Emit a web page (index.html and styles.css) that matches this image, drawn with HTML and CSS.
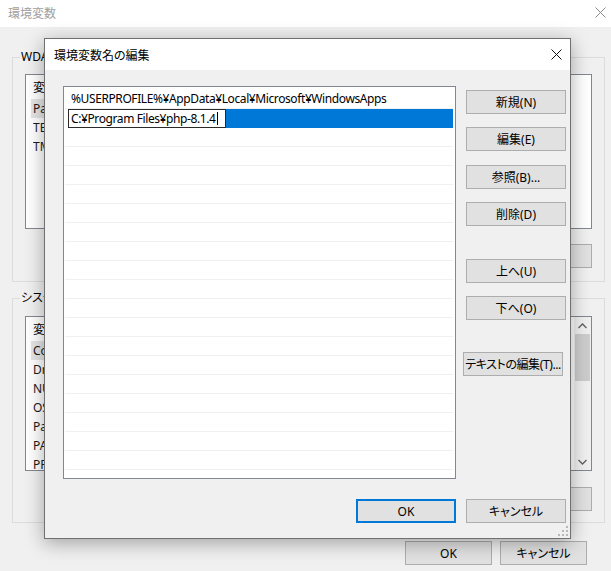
FILE: index.html
```html
<!DOCTYPE html>
<html lang="ja">
<head>
<meta charset="utf-8">
<title>環境変数名の編集</title>
<link rel="stylesheet" href="styles.css">
</head>
<body>
<div class="desk">
  <div class="bgwin">
    <div class="bg-title">
      <span class="bg-title-text">環境変数</span>
      <svg class="bg-close" width="11" height="11" viewBox="0 0 11 11"><path d="M0.5 0.5 L10.5 10.5 M10.5 0.5 L0.5 10.5" stroke="#8a8a8a" stroke-width="1" fill="none"/></svg>
    </div>
    <div class="bg-body">
      <fieldset class="group g-user">
        <legend>WDAG のユーザー環境変数(U)</legend>
        <div class="lv lv-user">
          <div class="lv-main">
            <div class="lv-head"><span class="c1">変数</span></div>
            <div class="lv-row sel"><span class="c1">Path</span></div>
            <div class="lv-row"><span class="c1">TEMP</span></div>
            <div class="lv-row"><span class="c1">TMP</span></div>
          </div>
        </div>
        <div class="grp-btns">
          <button class="bbtn"></button>
          <button class="bbtn"></button>
          <button class="bbtn"></button>
        </div>
      </fieldset>
      <fieldset class="group g-sys">
        <legend>システム環境変数(S)</legend>
        <div class="lv lv-sys">
          <div class="lv-main">
            <div class="lv-head"><span class="c1">変数</span></div>
            <div class="lv-row sel"><span class="c1">ComSpec</span></div>
            <div class="lv-row"><span class="c1">DriverData</span></div>
            <div class="lv-row"><span class="c1">NUMBER_OF</span></div>
            <div class="lv-row"><span class="c1">OS</span></div>
            <div class="lv-row"><span class="c1">Path</span></div>
            <div class="lv-row"><span class="c1">PATHEXT</span></div>
            <div class="lv-row"><span class="c1">PROCESSOR</span></div>
          </div>
          <div class="vscroll">
            <div class="sb-btn"><svg width="9" height="6" viewBox="0 0 9 6"><path d="M0.5 5 L4.5 1 L8.5 5" stroke="#606060" stroke-width="1.3" fill="none"/></svg></div>
            <div class="sb-track"><div class="sb-thumb"></div></div>
            <div class="sb-btn"><svg width="9" height="6" viewBox="0 0 9 6"><path d="M0.5 1 L4.5 5 L8.5 1" stroke="#606060" stroke-width="1.3" fill="none"/></svg></div>
          </div>
        </div>
        <div class="grp-btns">
          <button class="bbtn"></button>
          <button class="bbtn"></button>
          <button class="bbtn"></button>
        </div>
      </fieldset>
      <div class="bg-foot">
        <button class="bbtn foot">OK</button>
        <button class="bbtn foot">キャンセル</button>
      </div>
    </div>
  </div>

  <div class="dialog">
    <div class="dlg-title">
      <span class="dlg-title-text">環境変数名の編集</span>
      <svg class="dlg-close" width="11" height="11" viewBox="0 0 11 11"><path d="M0.5 0.5 L10.5 10.5 M10.5 0.5 L0.5 10.5" stroke="#111" stroke-width="1" fill="none"/></svg>
    </div>
    <div class="dlg-body">
      <div class="dlg-main">
        <div class="plist">
          <div class="prow">%USERPROFILE%¥AppData¥Local¥Microsoft¥WindowsApps</div>
          <div class="prow sel"><div class="edit"><span class="edit-text">C:¥Program Files¥php-8.1.4</span><span class="caret"></span></div></div>
          <div class="prow"></div>
          <div class="prow"></div>
          <div class="prow"></div>
          <div class="prow"></div>
          <div class="prow"></div>
          <div class="prow"></div>
          <div class="prow"></div>
          <div class="prow"></div>
          <div class="prow"></div>
          <div class="prow"></div>
          <div class="prow"></div>
          <div class="prow"></div>
          <div class="prow"></div>
          <div class="prow"></div>
          <div class="prow"></div>
          <div class="prow"></div>
          <div class="prow"></div>
          <div class="prow"></div>
          <div class="prow"></div>
        </div>
        <div class="side">
          <button class="btn">新規(N)</button>
          <button class="btn">編集(E)</button>
          <button class="btn b-ref">参照(B)...</button>
          <button class="btn">削除(D)</button>
          <button class="btn b-up">上へ(U)</button>
          <button class="btn">下へ(O)</button>
          <button class="btn b-text">テキストの編集(T)...</button>
        </div>
      </div>
      <div class="dlg-foot">
        <button class="btn default">OK</button>
        <button class="btn">キャンセル</button>
      </div>
    </div>
    <svg class="grip" width="10" height="10" viewBox="0 0 10 10">
      <rect x="8" y="0" width="2" height="2" fill="#b8b8b8"/>
      <rect x="4" y="4" width="2" height="2" fill="#b8b8b8"/>
      <rect x="8" y="4" width="2" height="2" fill="#b8b8b8"/>
      <rect x="0" y="8" width="2" height="2" fill="#b8b8b8"/>
      <rect x="4" y="8" width="2" height="2" fill="#b8b8b8"/>
      <rect x="8" y="8" width="2" height="2" fill="#b8b8b8"/>
    </svg>
  </div>
</div>
</body>
</html>
```

FILE: styles.css
```css
* { box-sizing: border-box; }

html, body {
  margin: 0;
  padding: 0;
  width: 611px;
  height: 571px;
  overflow: hidden;
}

body {
  font-family: "Noto Sans", "Noto Sans CJK JP", sans-serif;
  font-size: 12px;
  color: #000;
  background: #f0f0f0;
  font-feature-settings: "palt";
}

.desk {
  position: relative;
  width: 611px;
  height: 571px;
  overflow: hidden;
}

/* ---------- background window ---------- */
.bgwin {
  width: 611px;
  height: 571px;
  background: #f0f0f0;
  display: flex;
  flex-direction: column;
}

.bg-title {
  height: 27px;
  background: #fff;
  display: flex;
  align-items: center;
  justify-content: space-between;
  padding: 0 5px 2px 8px;
  flex: none;
}

.bg-title-text {
  color: #a0a0a0;
  font-family: "Noto Sans CJK JP", sans-serif;
  font-size: 12px;
}

.bg-body {
  padding: 22px 6px 0 12px;
  display: flex;
  flex-direction: column;
}

.group {
  margin: 0;
  border: 1px solid #dcdcdc;
  padding: 9px 12px 13px 12px;
  min-width: 0;
}

.group legend {
  padding: 0 1px;
  margin-left: -5px;
  line-height: 16px;
  height: 16px;
  white-space: nowrap;
}

.g-sys {
  margin-top: 8px;
  padding-top: 10px;
  padding-bottom: 11px;
}

.lv {
  border: 1px solid #828790;
  background: #fff;
  display: flex;
  overflow: hidden;
}

.lv-user { height: 155px; }
.lv-sys { height: 155px; }

.lv-main {
  flex: 1;
  min-width: 0;
  overflow: hidden;
}

.lv-head {
  height: 24px;
  display: flex;
  align-items: center;
  padding-left: 7px;
  white-space: nowrap;
}

.lv-row {
  width: 300px;
  height: 19px;
  display: flex;
  align-items: center;
  margin-left: 5px;
  padding-left: 2px;
  white-space: nowrap;
  color: #1a1a1a;
}

.lv-row.sel { background: #e5e5e5; }

.c1 {
  width: 170px;
  flex: none;
  overflow: hidden;
}

.vscroll {
  width: 17px;
  flex: none;
  background: #f0f0f0;
  display: flex;
  flex-direction: column;
}

.sb-btn {
  height: 17px;
  display: flex;
  align-items: center;
  justify-content: center;
  flex: none;
}

.sb-track {
  flex: 1;
  padding: 0 1px;
}

.sb-thumb {
  height: 47px;
  background: #cdcdcd;
}

.grp-btns {
  display: flex;
  justify-content: flex-end;
  gap: 8px;
  margin-top: 15px;
}

.g-sys .grp-btns { margin-top: 16px; }

.bbtn {
  width: 90px;
  height: 24px;
  background: #e1e1e1;
  border: 1px solid #adadad;
  font: inherit;
  color: #000;
  padding: 0;
}

.bg-foot {
  display: flex;
  justify-content: flex-end;
  gap: 8px;
  margin-top: 18px;
  padding-right: 18px;
}

.bbtn.foot { width: 87px; }

/* ---------- dialog ---------- */
.dialog {
  position: absolute;
  left: 44px;
  top: 38px;
  width: 527px;
  height: 501px;
  border: 1px solid #707070;
  background: #f0f0f0;
  box-shadow: 0 4px 18px rgba(0, 0, 0, 0.33);
  display: flex;
  flex-direction: column;
}

.dlg-title {
  height: 31px;
  flex: none;
  background: #fff;
  display: flex;
  align-items: center;
  justify-content: space-between;
  padding: 0 8px 0 9px;
}

.dlg-title-text {
  font-family: "Noto Sans CJK JP", sans-serif;
  font-size: 12px;
  color: #000;
}

.dlg-body {
  flex: 1;
  padding: 16px 4px 0 18px;
  display: flex;
  flex-direction: column;
}

.dlg-main {
  display: flex;
  gap: 10px;
}

.plist {
  width: 393px;
  height: 393px;
  flex: none;
  border: 1px solid #828790;
  background: #fff;
  padding-top: 3px;
  overflow: hidden;
}

.prow {
  height: 19px;
  margin: 0 2px 0 1px;
  border-bottom: 1px solid #f0f0f0;
  padding-left: 6px;
  line-height: 18px;
  white-space: nowrap;
  letter-spacing: -0.4px;
}

.prow.sel {
  margin-left: 4px;
  padding-left: 0;
  border-bottom: none;
  background: #0078d7;
}

.edit {
  width: 158px;
  height: 19px;
  border: 1px solid #2a2a2a;
  background: #fff;
  padding-left: 2px;
  line-height: 17px;
  display: flex;
  align-items: center;
}

.caret {
  width: 1px;
  height: 13px;
  background: #000;
  margin-left: 1px;
}

.side {
  display: flex;
  flex-direction: column;
  gap: 13px;
  padding-top: 4px;
}

.btn {
  width: 100px;
  height: 24px;
  background: #e1e1e1;
  border: 1px solid #adadad;
  font: inherit;
  color: #000;
  padding: 0;
  white-space: nowrap;
}

.b-ref { margin-top: 1px; }
.b-up { margin-top: 20px; }
.b-text {
  margin-top: 19px;
  margin-left: -3px;
  letter-spacing: -0.4px;
}

.btn.default {
  border: 2px solid #0078d7;
}

.dlg-foot {
  display: flex;
  justify-content: flex-end;
  gap: 10px;
  margin-top: 20px;
}

.grip {
  position: absolute;
  right: 2px;
  bottom: 2px;
}
```
